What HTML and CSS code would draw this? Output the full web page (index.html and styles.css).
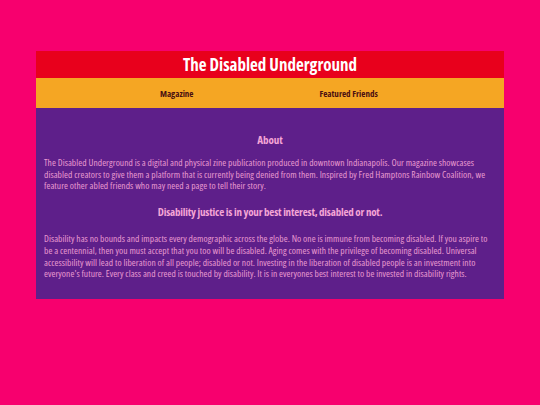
FILE: index.html
```html
<!DOCTYPE html>
<html>
<head>
<meta charset="utf-8">
<link rel="stylesheet" href="styles.css">
</head>
<body>
<div class="page">
  <header class="header">
    <h1 class="title">The Disabled Underground</h1>
  </header>
  <nav class="nav">
    <a class="nav-link">Magazine</a>
    <a class="nav-link">Featured Friends</a>
  </nav>
  <main class="main">
    <h2 class="heading">About</h2>
    <p class="text">The Disabled Underground is a digital and physical zine publication produced in downtown Indianapolis. Our magazine showcases disabled creators to give them a platform that is currently being denied from them. Inspired by Fred Hamptons Rainbow Coalition, we feature other abled friends who may need a page to tell their story.</p>
    <h2 class="heading heading-lg">Disability justice is in your best interest, disabled or not.</h2>
    <p class="text text-2">Disability has no bounds and impacts every demographic across the globe. No one is immune from becoming disabled. If you aspire to be a centennial, then you must accept that you too will be disabled. Aging comes with the privilege of becoming disabled. Universal accessibility will lead to liberation of all people; disabled or not. Investing in the liberation of disabled people is an investment into everyone's future. Every class and creed is touched by disability. It is in everyones best interest to be invested in disability rights.</p>
  </main>
</div>
</body>
</html>
```
FILE: styles.css
```css
html, body {
  margin: 0;
  padding: 0;
}
body {
  background: #f7006e;
  font-family: "Open Sans", "DejaVu Sans Condensed", sans-serif;
  font-stretch: 75%;
  padding: 51px 36px 0 36px;
  height: 405px;
  box-sizing: border-box;
}
.page {
  width: 468px;
}
.header {
  background: #e8001c;
  height: 27px;
  display: flex;
  align-items: center;
  justify-content: center;
}
.title {
  margin: 0;
  color: #ffffff;
  font-size: 17px;
  font-weight: bold;
  font-stretch: 87.5%;
  line-height: 1;
}
.nav {
  background: #f5a623;
  height: 30px;
  display: flex;
  align-items: center;
  gap: 126px;
  padding: 0 0 0 124px;
  box-sizing: border-box;
}
.nav-link {
  color: #4a0f12;
  font-size: 9px;
  font-weight: bold;
}
.main {
  background: #5e1f8a;
  padding: 25px 8px 28px 8px;
  height: 191px;
  box-sizing: border-box;
}
.heading {
  margin: 0;
  text-align: center;
  color: #f5a6d6;
  font-size: 11px;
  line-height: 14px;
  font-weight: bold;
}
.heading-lg {
  font-size: 11px;
  margin-top: 13px;
  letter-spacing: -0.2px;
}
.text {
  margin: 10px 0 0 0;
  color: #e99ad0;
  font-size: 9.5px;
  line-height: 11.7px;
  letter-spacing: 0.05px;
}
.text-2 {
  margin-top: 14px;
}
```
